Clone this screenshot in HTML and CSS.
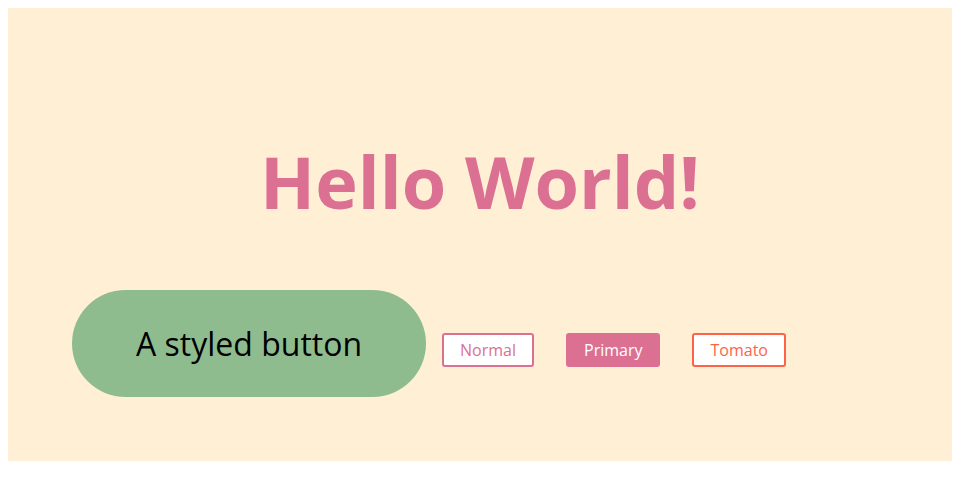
FILE: index.html
```html
<!DOCTYPE html>
<html>
<head>
<meta charset="utf-8">
<link rel="stylesheet" href="styles.css">
</head>
<body>
<section class="wrapper">
  <h1 class="title">Hello World!</h1>
  <div class="row"><button class="big">A styled button</button><button class="btn">Normal</button><button class="btn primary">Primary</button><button class="btn tomato">Tomato</button></div>
</section>
</body>
</html>
```
FILE: styles.css
```css
body {
  margin: 8px;
  font-family: "Open Sans", sans-serif;
}
.wrapper {
  background: #FFEFD5;
  padding: 64px;
}
.title {
  margin: 60px 0;
  font-size: 72px;
  line-height: normal;
  font-weight: 700;
  text-align: center;
  color: #DB7093;
}
.row {
  line-height: normal;
}
.big {
  display: inline-block;
  font-family: "Open Sans", sans-serif;
  font-size: 32px;
  line-height: normal;
  padding: 32px 64px;
  border: none;
  border-radius: 999px;
  background: #8FBC8F;
  color: #000;
  margin: 0;
}
.btn {
  display: inline-block;
  font-family: "Open Sans", sans-serif;
  font-size: 16px;
  line-height: normal;
  margin: 16px;
  padding: 4px 16px;
  border: 2px solid #DB7093;
  border-radius: 3px;
  background: #fff;
  color: #DB7093;
}
.primary {
  background: #DB7093;
  color: #fff;
}
.tomato {
  border-color: #FF6347;
  color: #FF6347;
}
```
